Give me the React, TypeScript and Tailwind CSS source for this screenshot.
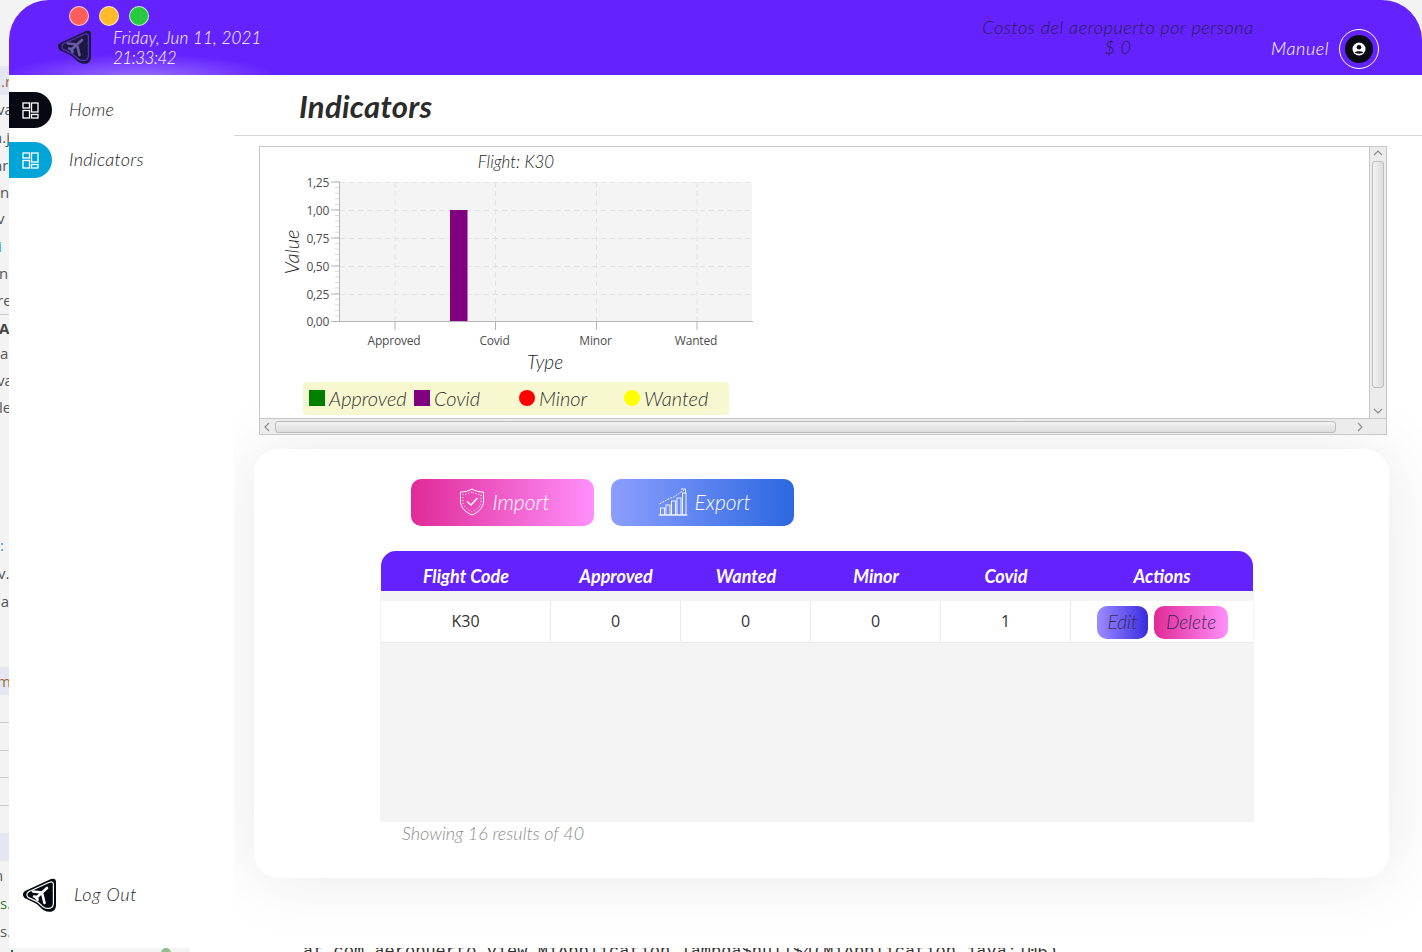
import React from "react";

const font = "[font-family:'Lato','Open_Sans',sans-serif]";

const stripRows = [
  { y: "h-[29px] pt-[2px] bg-[#e4e6f2] text-[#9a6b3a]", s: "ml-[1px]", t: ".r" },
  { y: "h-[28px] text-[#555]", s: "-ml-[3px]", t: "va" },
  { y: "h-[28px] text-[#555]", s: "-ml-[7px]", t: "n.j" },
  { y: "h-[28px] text-[#555]", s: "-ml-[6px]", t: "ar" },
  { y: "h-[26px] text-[#555]", s: "", t: "n" },
  { y: "h-[27px] text-[#555]", s: "-ml-[3px]", t: "v" },
  { y: "h-[28px] text-[#2f8fd0]", s: "-ml-[2px]", t: "i" },
  { y: "h-[27px] text-[#555]", s: "-ml-[1px]", t: "n" },
  { y: "h-[27px] text-[#555]", s: "-ml-[3px]", t: "re" },
  { y: "h-[27px] border-t border-[#ccc] font-bold text-[#444]", s: "-ml-[1px]", t: "A" },
  { y: "h-[25px] text-[#555]", s: "", t: "a" },
  { y: "h-[28px] text-[#555]", s: "-ml-[3px]", t: "va" },
  { y: "h-[27px] text-[#555]", s: "-ml-[1px]", t: "le" },
  { y: "h-[28px] mt-[110px] text-[#2f8fd0]", s: "", t: ":" },
  { y: "h-[28px] text-[#555]", s: "-ml-[2px]", t: "v." },
  { y: "h-[28px] text-[#555]", s: "-ml-[3px]", t: "ja" },
  { y: "h-[28px] mt-[52px] bg-[#e4e6f2] text-[#9a6b3a]", s: "-ml-[3px]", t: "m" },
  { y: "h-[28px] border-b border-[#ccc]", s: "", t: "" },
  { y: "h-[28px] border-b border-[#ccc]", s: "", t: "" },
  { y: "h-[27px] border-b border-[#ccc]", s: "", t: "" },
  { y: "h-[28px] border-b border-[#ccc]", s: "", t: "" },
  { y: "h-[28px] mt-[27px] bg-[#e4e6f2]", s: "", t: "" },
  { y: "h-[28px] text-[#555]", s: "-ml-[6px]", t: "n" },
  { y: "h-[28px] text-[#2e7d32]", s: "", t: "s." },
  { y: "h-[28px] text-[#555]", s: "", t: "s.i" },
];

const LOGO_PATH = "M30 2 L4 14 Q0 17 3.5 21 L12 25 Q16 26.5 19 30 Q24 36 31 34.5 Q35 33 35 28 V5 Q35 0.5 30 2 Z";

function Logo({ className, body, line, plane }: { className: string; body: string; line: string; plane: string }) {
  return (
    <svg viewBox="0 0 36 36" className={className} fill="none">
      <path d={LOGO_PATH} fill={body} />
      <path d={LOGO_PATH} stroke={line} strokeWidth="1.5" transform="translate(4.4 3.6) scale(0.8)" />
      <path
        d="M26 11 L15 21 M21 15.5 L12 14.5 M21 15.5 L23.5 26 M16 20 L13 19.5 M16 20 L16.5 23"
        stroke={plane}
        strokeWidth="2.6"
        strokeLinecap="round"
      />
    </svg>
  );
}

function DashIcon() {
  return (
    <svg viewBox="0 0 17 17" className="h-[17px] w-[17px]" fill="none" stroke="#fff" strokeWidth="1.3">
      <rect x="1" y="1" width="6.5" height="5" />
      <rect x="1" y="8.5" width="6.5" height="7.5" />
      <rect x="9.5" y="1" width="6.5" height="9" />
      <rect x="9.5" y="12.5" width="6.5" height="3.5" />
    </svg>
  );
}

function ShieldIcon() {
  return (
    <svg viewBox="0 0 26 28" className="h-[28px] w-[26px]" fill="none" stroke="#fff" strokeWidth="1">
      <path d="M13 1 C9 3.5 5 4 1.5 4 V13 C1.5 20 7 24.5 13 27 C19 24.5 24.5 20 24.5 13 V4 C21 4 17 3.5 13 1 Z" />
      <path d="M13 4 C10 5.5 7 6.5 4 6.5 V13 C4 18.5 8.5 22 13 24 C17.5 22 22 18.5 22 13 V6.5 C19 6.5 16 5.5 13 4 Z" strokeDasharray="1 2" />
      <path d="M8 13.5 L12 17 L18.5 10" strokeWidth="1.4" />
    </svg>
  );
}

function ChartIcon() {
  return (
    <svg viewBox="0 0 30 28" className="h-[28px] w-[30px]" fill="none" stroke="#fff" strokeWidth="0.9">
      <path d="M0.5 27 H29.5" />
      <rect x="2.5" y="20" width="4" height="7" />
      <rect x="8" y="17" width="4" height="10" />
      <rect x="13.5" y="13" width="4" height="14" />
      <rect x="19" y="10" width="4" height="17" />
      <rect x="24.5" y="5" width="3.5" height="22" />
      <path d="M1.5 16 C6 13 9 12 12 10 C16 10 18 7 26 2" strokeDasharray="2 1" />
      <path d="M23 1 H27.5 V5" />
    </svg>
  );
}

function Chart() {
  const plotL = 340;
  const ys = [182, 210, 238, 266, 294, 321.5];
  const labels = ["1,25", "1,00", "0,75", "0,50", "0,25", "0,00"];
  const cats = [
    { x: 395, t: "Approved" },
    { x: 495.5, t: "Covid" },
    { x: 596.5, t: "Minor" },
    { x: 697, t: "Wanted" },
  ];
  const minor = Array.from({ length: 25 }, (_, i) => 182 + (i * 139.5) / 25);
  return (
    <svg width="520" height="272" viewBox="260 147 520 272" className="block">
      <rect x={plotL} y="182" width="412" height="139.5" fill="#f4f4f4" />
      {ys.slice(0, 5).map((y) => (
        <line key={y} x1={plotL} x2="752" y1={y + 0.5} y2={y + 0.5} stroke="#e2e2e2" strokeDasharray="5 4" />
      ))}
      {cats.map((c) => (
        <line key={c.x} x1={c.x} x2={c.x} y1="182" y2="321" stroke="#e2e2e2" strokeDasharray="5 4" />
      ))}
      {minor.map((y) => (
        <line key={y} x1="335" x2={plotL} y1={y} y2={y} stroke="#dcdcdc" />
      ))}
      {ys.map((y) => (
        <line key={y} x1="331" x2={plotL} y1={y} y2={y} stroke="#b5b5b5" />
      ))}
      <line x1={plotL - 0.5} x2={plotL - 0.5} y1="182" y2="322" stroke="#b5b5b5" />
      <line x1="331" x2="753" y1="321.5" y2="321.5" stroke="#b5b5b5" />
      {cats.map((c) => (
        <line key={c.t} x1={c.x} x2={c.x} y1="321" y2="330" stroke="#b5b5b5" />
      ))}
      <rect x="450" y="210" width="17.5" height="111" fill="#800080" />
      <g fontFamily="'Open Sans', sans-serif" fontSize="12" fill="#4d4d4d">
        {labels.map((l, i) => (
          <text key={l} x="329" y={ys[i] + 4.5} textAnchor="end" letterSpacing="-0.3">
            {l}
          </text>
        ))}
        {cats.map((c) => (
          <text key={c.t} x={c.x - 1} y="345" textAnchor="middle" letterSpacing="-0.2">
            {c.t}
          </text>
        ))}
      </g>
      <g fontFamily="Lato, sans-serif" fontStyle="italic" fontWeight="300" fill="#222">
        <text x="516" y="168" fontSize="17" textAnchor="middle">Flight: K30</text>
        <text x="545" y="369" fontSize="19" textAnchor="middle">Type</text>
        <text x="299" y="252" fontSize="20" textAnchor="middle" transform="rotate(-90 299 252)">Value</text>
      </g>
    </svg>
  );
}

function Arrow({ d }: { d: string }) {
  return (
    <svg viewBox="0 0 10 10" className="h-[10px] w-[10px]" fill="none" stroke="#8a8a8a" strokeWidth="1.1">
      <path d={d} />
    </svg>
  );
}

const columns = [
  { w: "w-[170px]", head: "Flight Code", val: "K30" },
  { w: "w-[130px]", head: "Approved", val: "0" },
  { w: "w-[130px]", head: "Wanted", val: "0" },
  { w: "w-[130px]", head: "Minor", val: "0" },
  { w: "w-[130px]", head: "Covid", val: "1" },
];

const legend = [
  { w: "w-[105px]", icon: "bg-[#008000]", t: "Approved" },
  { w: "w-[105px]", icon: "bg-[#800080]", t: "Covid" },
  { w: "w-[105px]", icon: "bg-[#ff0000] rounded-full", t: "Minor" },
  { w: "w-[105px]", icon: "bg-[#ffff00] rounded-full", t: "Wanted" },
];

export default function App() {
  return (
    <div className={`flex h-[952px] w-[1422px] flex-col overflow-hidden bg-[#f3f3f3] text-[#333] ${font}`}>
      <div className="flex h-[948px] shrink-0">
        {/* what is left of the window behind */}
        <div className="w-[9px] shrink-0 overflow-hidden pt-[66px] text-[15px] font-['Open_Sans',sans-serif]">
          {stripRows.map((r, i) => (
            <div key={i} className={`flex w-[9px] items-center whitespace-nowrap ${r.y}`}>
              <span className={r.s}>{r.t}</span>
            </div>
          ))}
        </div>

        <div className="flex h-[948px] w-[1413px] flex-col">
          <header className="relative flex h-[75px] shrink-0 items-center overflow-hidden rounded-t-[40px] bg-[#6422ff] bg-[radial-gradient(ellipse_140px_24px_at_130px_78px,rgba(255,255,255,0.35),rgba(255,255,255,0))]">
            <div className="absolute left-[60px] top-[6px] flex gap-[10px]">
              <span className="h-5 w-5 rounded-full border border-white/70 bg-[#ff5f5a]" />
              <span className="h-5 w-5 rounded-full border border-white/70 bg-[#ffbb2b]" />
              <span className="h-5 w-5 rounded-full border border-white/70 bg-[#28c83f]" />
            </div>
            <div className="ml-[47px] mt-[19px] shrink-0">
              <Logo className="h-[36px] w-[36px]" body="#1d1840" line="#5a2fd0" plane="#6a5aa8" />
            </div>
            <div className="ml-[21px] mt-[21px] w-[300px] shrink-0 text-[17px] font-light italic leading-[20px] text-white">
              <div className="tracking-[0.2px]">Friday, Jun 11, 2021</div>
              <div className="tracking-[-0.5px]">21:33:42</div>
            </div>
            <div className="ml-[560px] mb-[1px] w-[290px] shrink-0 text-center text-[18px] font-light italic leading-5 tracking-[0.6px] text-[#2a1f4a]">
              <div>Costos del aeropuerto por persona</div>
              <div>$ 0</div>
            </div>
            <div className="ml-[8px] mt-[22px] flex items-center">
              <span className="text-[18px] font-light italic tracking-[0.6px] text-white">Manuel</span>
              <span className="ml-[10px] flex h-10 w-10 items-center justify-center rounded-full border border-white">
                <span className="flex h-[28px] w-[28px] items-center justify-center rounded-full bg-[#0b0b14]">
                  <svg viewBox="0 0 14 14" className="h-[14px] w-[14px]">
                    <circle cx="7" cy="7" r="6.5" fill="#fff" />
                    <circle cx="7" cy="5.2" r="2.3" fill="#0b0b14" />
                    <path d="M2.8 10.6 C4 8.8 10 8.8 11.2 10.6 C10 12 4 12 2.8 10.6 Z" fill="#0b0b14" />
                  </svg>
                </span>
              </span>
            </div>
          </header>

          <div className="flex min-h-0 flex-1 bg-white">
            <aside className="relative z-10 flex w-[225px] shrink-0 flex-col rounded-b-[40px] bg-white">
              <a className="mt-[17px] flex items-center">
                <span className="flex h-[36px] w-[43px] items-center justify-center rounded-r-[18px] bg-[#060912]">
                  <DashIcon />
                </span>
                <span className="ml-[17px] pb-[2px] text-[18px] font-light italic tracking-[0.3px] text-[#222]">Home</span>
              </a>
              <a className="mt-[14px] flex items-center">
                <span className="flex h-[36px] w-[43px] items-center justify-center rounded-r-[18px] bg-[#00a5d8]">
                  <DashIcon />
                </span>
                <span className="ml-[17px] pb-[2px] text-[18px] font-light italic tracking-[0.3px] text-[#222]">Indicators</span>
              </a>
              <a className="mb-[34px] ml-[12px] mt-auto flex items-center">
                <Logo className="h-[38px] w-[36px]" body="#060912" line="#ffffff" plane="#ffffff" />
                <span className="ml-[17px] pb-[2px] text-[18px] font-light italic tracking-[0.7px] text-[#222]">Log Out</span>
              </a>
            </aside>

            <main className="flex min-w-0 flex-1 flex-col">
              <div className="relative z-10 flex h-[61px] shrink-0 items-center border-b border-[#d4d4d4] bg-white pl-[65px] pt-[2px]">
                <h1 className="text-[31px] font-bold italic tracking-[0.3px] text-[#2b2b2b]">Indicators</h1>
              </div>

              <div className="flex-1 pl-[20px]">
                <div className="relative z-10 ml-[5px] mt-[10px] h-[289px] w-[1128px] border border-[#c8c8c8] bg-white">
                  <div className="flex h-[271px]">
                    <div className="h-[271px] flex-1 overflow-hidden">
                      <div className="relative h-[271px] w-[520px]">
                        <Chart />
                        <div className="absolute left-[43px] top-[235px] flex h-[33px] w-[426px] items-center rounded-[3px] bg-[#f8f8d0] pb-[2px] pl-[6px] text-[20px] font-light italic text-[#333]">
                          {legend.map((l) => (
                            <span key={l.t} className={`flex items-center ${l.w}`}>
                              <span className={`mr-[4px] h-4 w-4 ${l.icon}`} />
                              {l.t}
                            </span>
                          ))}
                        </div>
                      </div>
                    </div>
                    <div className="flex w-[17px] flex-col items-center border-l border-[#c8c8c8] bg-[#ececec]">
                      <span className="mt-[1px]"><Arrow d="M1 7 L5 3 L9 7" /></span>
                      <span className="mt-[3px] h-[227px] w-[12px] rounded-[3px] border border-[#bdbdbd] bg-[linear-gradient(90deg,#f2f2f2,#dcdcdc)]" />
                      <span className="mb-[2px] mt-auto"><Arrow d="M1 3 L5 7 L9 3" /></span>
                    </div>
                  </div>
                  <div className="flex h-[16px] items-center border-t border-[#c8c8c8] bg-[#ececec]">
                    <span className="ml-[2px]"><Arrow d="M7 1 L3 5 L7 9" /></span>
                    <span className="ml-[3px] h-[12px] w-[1061px] rounded-[3px] border border-[#bdbdbd] bg-[linear-gradient(#f2f2f2,#dcdcdc)]" />
                    <span className="ml-[19px]"><Arrow d="M3 1 L7 5 L3 9" /></span>
                  </div>
                </div>

                <section className="mt-[14px] h-[429px] w-[1135px] rounded-[24px] bg-white pl-[127px] pt-[30px] shadow-[0_0_70px_rgba(0,0,0,0.09)]">
                  <div className="ml-[30px] flex gap-[17px]">
                    <button className="flex h-[47px] w-[183px] items-center justify-center gap-[7px] rounded-[10px] bg-[linear-gradient(90deg,#e02a97,#ff90fb)] pb-[2px] pl-[4px] text-[21px] font-light italic text-white">
                      <ShieldIcon />
                      Import
                    </button>
                    <button className="flex h-[47px] w-[183px] items-center justify-center gap-[6px] rounded-[10px] bg-[linear-gradient(90deg,#8c9eff,#2c68e0)] pb-[2px] pl-[4px] text-[21px] font-light italic text-white">
                      <ChartIcon />
                      Export
                    </button>
                  </div>

                  <div className="mt-[25px] w-[873px]">
                    <div className="flex h-[40px] w-[872px] rounded-t-[15px] bg-[#6422ff] pt-[12px] text-[18px] font-bold italic text-white">
                      {columns.map((c) => (
                        <div key={c.head} className={`${c.w} text-center`}>{c.head}</div>
                      ))}
                      <div className="flex-1 text-center">Actions</div>
                    </div>
                    <div className="-ml-px h-[231px] w-[874px] bg-[#f4f4f4] pl-px pt-[10px]">
                      <div className="flex h-[42px] w-[872px] border-b border-[#ebebeb] bg-white font-['Open_Sans',sans-serif] text-[16px] text-[#333]">
                        {columns.map((c) => (
                          <div key={c.head} className={`flex items-center justify-center border-r border-[#ebebeb] pb-[2px] ${c.w}`}>
                            {c.val}
                          </div>
                        ))}
                        <div className="flex flex-1 items-center gap-[6px] pl-[26px] pt-[1px] font-['Lato',sans-serif] text-[19px] font-light italic text-[#3a2a5c]">
                          <button className="flex h-[33px] w-[51px] items-center justify-center rounded-[10px] bg-[linear-gradient(90deg,#9d8cff,#3a2be0)]">Edit</button>
                          <button className="flex h-[33px] w-[74px] items-center justify-center rounded-[10px] bg-[linear-gradient(90deg,#e02a97,#ff90fb)]">Delete</button>
                        </div>
                      </div>
                    </div>
                    <p className="-mt-[2px] ml-[21px] text-[18px] font-light italic text-[#8c8c8c]">Showing 16 results of 40</p>
                  </div>
                </section>
              </div>
            </main>
          </div>
        </div>
      </div>

      {/* bottom edge of the window behind */}
      <div className="flex h-[4px] shrink-0 overflow-hidden">
        <div className="flex w-[190px] shrink-0 bg-[#f3f3f3]">
          <span className="ml-[11px] mt-[2px] h-[2px] w-[2px] bg-[#1f6b3a]" />
          <span className="ml-[148px] h-[10px] w-[10px] rounded-full bg-[#8fbf8f]" />
        </div>
        <div className="h-[24px] flex-1 -translate-y-[6px] whitespace-nowrap bg-white pl-[113px] font-['Liberation_Mono',monospace] text-[17px] leading-[20px] text-[#333]">
          at com.aeropuerto.view.MiApplication.lambda$null$4(MiApplication.java:106)
        </div>
      </div>
    </div>
  );
}
